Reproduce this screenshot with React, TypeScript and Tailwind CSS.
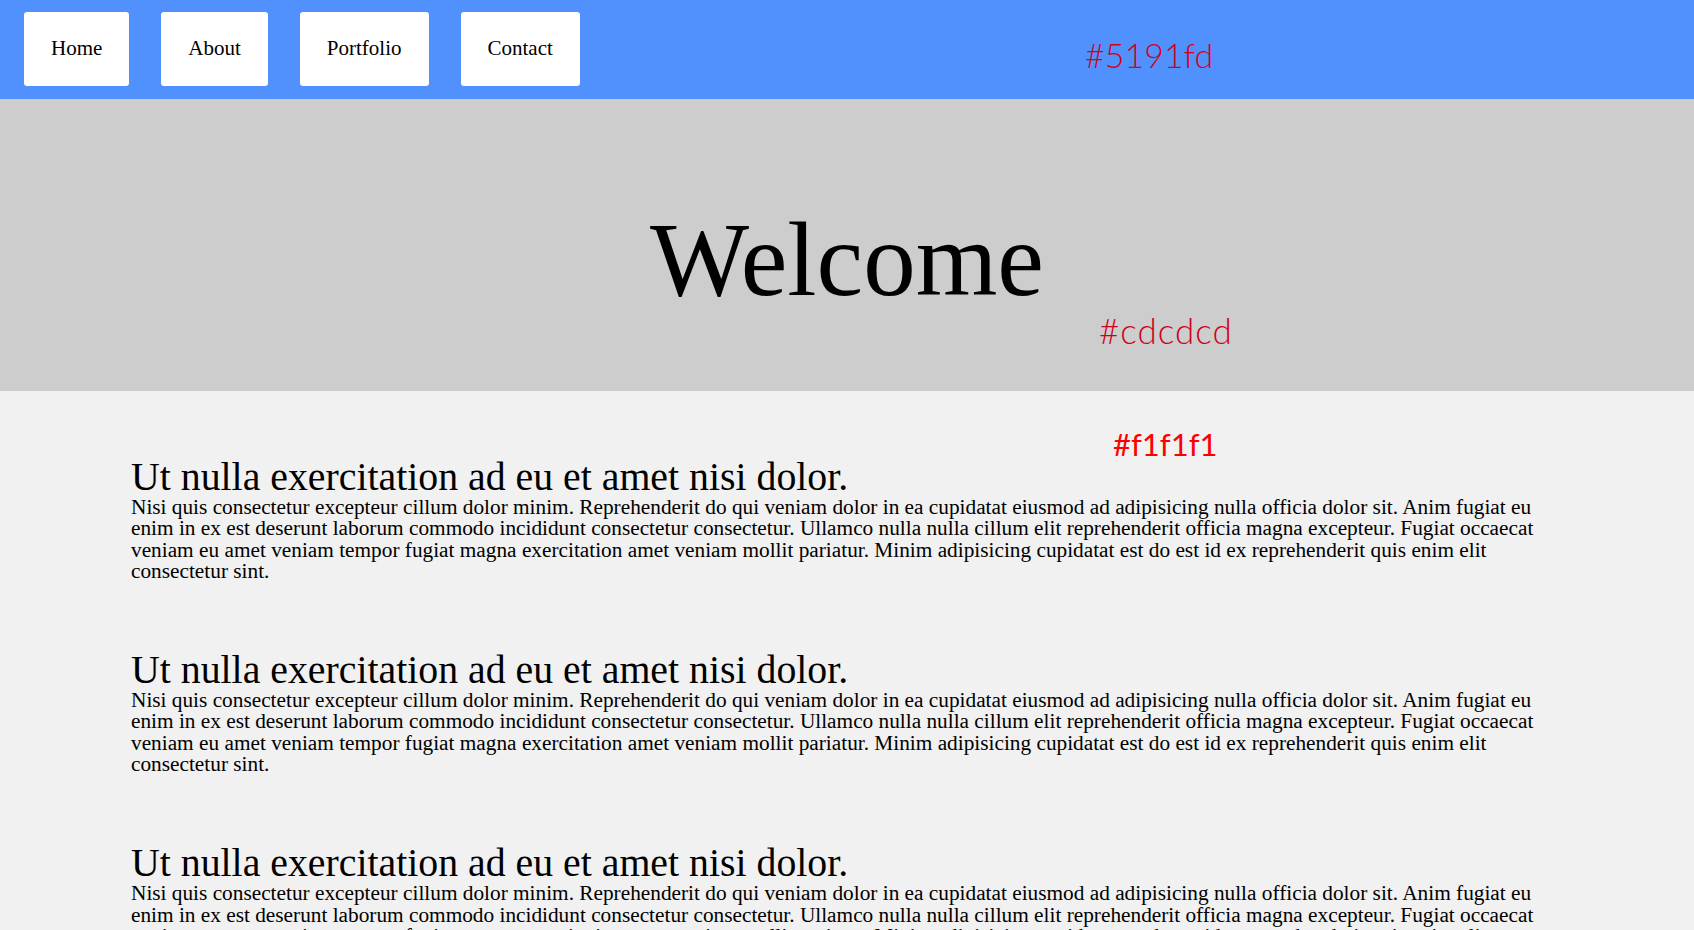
// Landing page mock: nav · hero · text sections, with colour annotations

const NAV_ITEMS = ['Home', 'About', 'Portfolio', 'Contact']

const HEADING = 'Ut nulla exercitation ad eu et amet nisi dolor.'
const BODY =
  'Nisi quis consectetur excepteur cillum dolor minim. Reprehenderit do qui veniam dolor in ea cupidatat eiusmod ad adipisicing nulla officia dolor sit. Anim fugiat eu enim in ex est deserunt laborum commodo incididunt consectetur consectetur. Ullamco nulla nulla cillum elit reprehenderit officia magna excepteur. Fugiat occaecat veniam eu amet veniam tempor fugiat magna exercitation amet veniam mollit pariatur. Minim adipisicing cupidatat est do est id ex reprehenderit quis enim elit consectetur sint.'

// ─── Colour label ────────────────────────────────────────────────────────────

function Swatch({ label, className }: { label: string; className: string }) {
  return (
    <span
      className={`absolute leading-none font-['Lato','Noto_Sans',sans-serif] whitespace-nowrap ${className}`}
    >
      {label}
    </span>
  )
}

function Section() {
  return (
    <section>
      <h2 className="text-[39.8px] leading-[40px] font-normal">{HEADING}</h2>
      <p className="text-[21.3px] leading-[21.3px]">{BODY}</p>
    </section>
  )
}

export default function App() {
  return (
    <div className="min-h-screen bg-[#f1f1f1] font-['Liberation_Serif','Times_New_Roman',serif] text-black">
      {/* Nav */}
      <nav className="relative h-[99px] bg-[#5191fd] pl-[24px] pt-[12px]">
        <ul className="flex gap-[32px]">
          {NAV_ITEMS.map(item => (
            <li key={item}>
              <a className="flex h-[74px] items-center rounded-[3px] bg-white px-[27px] text-[21px]">
                {item}
              </a>
            </li>
          ))}
        </ul>
        <Swatch label="#5191fd" className="left-[1085px] top-[38px] text-[34px] font-light text-[#d0021b]" />
      </nav>

      {/* Hero */}
      <header className="relative h-[292px] bg-[#cdcdcd] pt-[108px]">
        <h1 className="text-center text-[105px] leading-none font-normal">Welcome</h1>
        <Swatch label="#cdcdcd" className="left-[1099px] top-[214px] text-[35px] tracking-[1px] font-light text-[#d0021b]" />
      </header>

      {/* Content */}
      <main className="relative mx-[131px] space-y-[68px] pt-[66px] pb-16">
        <Swatch label="#f1f1f1" className="left-[982px] top-[38px] text-[31px] font-normal text-[#ff0000]" />
        <Section />
        <Section />
        <Section />
      </main>
    </div>
  )
}
